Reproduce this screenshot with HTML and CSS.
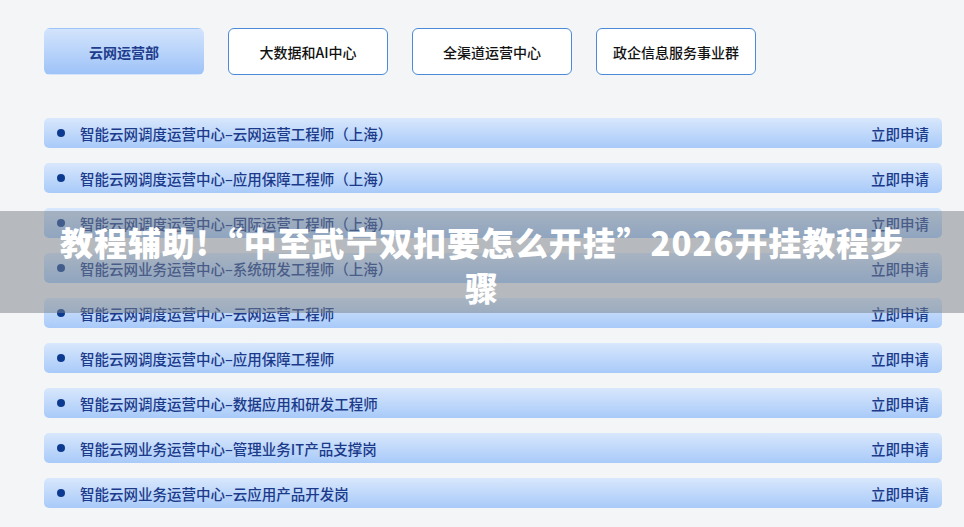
FILE: index.html
```html
<!DOCTYPE html>
<html lang="zh-CN">
<head>
<meta charset="utf-8">
<link rel="stylesheet" href="styles.css">
</head>
<body>
<div class="page">
  <div class="tabs">
    <div class="tab active">云网运营部</div>
    <div class="tab">大数据和AI中心</div>
    <div class="tab">全渠道运营中心</div>
    <div class="tab">政企信息服务事业群</div>
  </div>
  <div class="list">
    <div class="row"><span class="dot"></span><span class="title">智能云网调度运营中心–云网运营工程师（上海）</span><span class="apply">立即申请</span></div>
    <div class="row"><span class="dot"></span><span class="title">智能云网调度运营中心–应用保障工程师（上海）</span><span class="apply">立即申请</span></div>
    <div class="row"><span class="dot"></span><span class="title">智能云网调度运营中心–国际运营工程师（上海）</span><span class="apply">立即申请</span></div>
    <div class="row"><span class="dot"></span><span class="title">智能云网业务运营中心–系统研发工程师（上海）</span><span class="apply">立即申请</span></div>
    <div class="row"><span class="dot"></span><span class="title">智能云网调度运营中心–云网运营工程师</span><span class="apply">立即申请</span></div>
    <div class="row"><span class="dot"></span><span class="title">智能云网调度运营中心–应用保障工程师</span><span class="apply">立即申请</span></div>
    <div class="row"><span class="dot"></span><span class="title">智能云网调度运营中心–数据应用和研发工程师</span><span class="apply">立即申请</span></div>
    <div class="row"><span class="dot"></span><span class="title">智能云网业务运营中心–管理业务IT产品支撑岗</span><span class="apply">立即申请</span></div>
    <div class="row"><span class="dot"></span><span class="title">智能云网业务运营中心–云应用产品开发岗</span><span class="apply">立即申请</span></div>
  </div>
</div>
<div class="banner">
  <div class="banner-text">教程辅助!“中至武宁双扣要怎么开挂”2026开挂教程步骤</div>
</div>
</body>
</html>
```
FILE: styles.css
```css
html, body {
  margin: 0;
  padding: 0;
  background: #f4f5f6;
  font-family: "Noto Sans CJK SC", "Noto Sans", sans-serif;
}
.page {
  padding: 28px 22px 0 44px;
}
.tabs {
  display: flex;
  gap: 24px;
}
.tab {
  width: 158px;
  height: 45px;
  box-sizing: content-box;
  border: 1.5px solid #4a8ad6;
  border-radius: 6px;
  background: #ffffff;
  display: flex;
  align-items: center;
  justify-content: center;
  font-size: 14px;
  font-weight: 500;
  color: #111;
}
.tab.active {
  border-color: transparent;
  background: linear-gradient(#d3e4fc, #9ec3f8);
  color: #1e3d8c;
  font-weight: 600;
}
.list {
  margin-top: 43px;
  display: flex;
  flex-direction: column;
  gap: 15px;
  width: 898px;
}
.row {
  height: 30px;
  border-radius: 5px;
  background: linear-gradient(#d8e7fc, #a8caf9);
  display: flex;
  align-items: center;
  padding: 0 13px 0 13px;
  color: #1b3a8a;
  font-size: 14.5px;
  font-weight: 500;
}
.dot {
  width: 8px;
  height: 8px;
  border-radius: 50%;
  background: #0d3a91;
  margin: 0 14px 0 0;
  flex: none;
}
.title {
  flex: 1;
  margin-left: 1px;
}
.apply {
  flex: none;
}
.banner {
  position: absolute;
  left: 0;
  top: 211px;
  width: 964px;
  height: 102px;
  background: rgba(120, 128, 134, 0.5);
  display: flex;
  align-items: center;
  justify-content: center;
}
.banner-text {
  width: 860px;
  padding-top: 6px;
  text-align: center;
  color: #ffffff;
  font-size: 33px;
  font-weight: 900;
  line-height: 45px;
  letter-spacing: 0.9px;
}
```
